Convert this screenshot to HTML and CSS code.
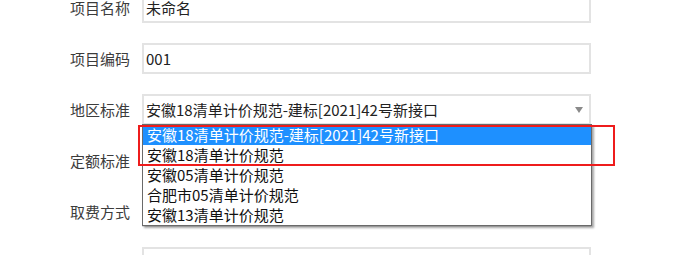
FILE: index.html
```html
<!DOCTYPE html>
<html lang="zh">
<head>
<meta charset="utf-8">
<link rel="stylesheet" href="styles.css">
</head>
<body>
<div class="form">
  <div class="row">
    <label class="label">项目名称</label>
    <div class="field">未命名</div>
  </div>
  <div class="row">
    <label class="label">项目编码</label>
    <div class="field">001</div>
  </div>
  <div class="row">
    <label class="label">地区标准</label>
    <div class="field select">
      <span>安徽18清单计价规范-建标[2021]42号新接口</span>
      <span class="arrow"></span>
      <ul class="dropdown">
        <li class="active">安徽18清单计价规范-建标[2021]42号新接口</li>
        <li>安徽18清单计价规范</li>
        <li>安徽05清单计价规范</li>
        <li>合肥市05清单计价规范</li>
        <li>安徽13清单计价规范</li>
      </ul>
      <div class="highlight-box"></div>
    </div>
  </div>
  <div class="row">
    <label class="label">定额标准</label>
    <div class="field"></div>
  </div>
  <div class="row">
    <label class="label">取费方式</label>
    <div class="field"></div>
  </div>
  <div class="row">
    <label class="label"></label>
    <div class="field"></div>
  </div>
</div>
</body>
</html>
```
FILE: styles.css
```css
html, body {
  margin: 0;
  padding: 0;
  background: #ffffff;
  overflow: hidden;
}
body {
  width: 678px;
  height: 255px;
  font-family: "Noto Sans CJK SC", "Noto Sans", sans-serif;
  font-size: 15px;
}
.form {
  display: flex;
  flex-direction: column;
  gap: 20px;
  margin-top: -8px;
  padding-left: 70px;
}
.row {
  display: flex;
  align-items: center;
  height: 31px;
}
.label {
  width: 60px;
  padding-right: 12px;
  color: #3c3c3c;
  font-size: 15px;
  text-align: left;
  white-space: nowrap;
}
.field {
  position: relative;
  box-sizing: border-box;
  width: 449px;
  height: 31px;
  border: 2px solid #e3e3e3;
  padding-left: 2px;
  display: flex;
  align-items: center;
  color: #222;
  font-size: 15px;
}
.select {
  justify-content: space-between;
}
.arrow {
  width: 0;
  height: 0;
  margin-right: 6px;
  border-left: 4px solid transparent;
  border-right: 4px solid transparent;
  border-top: 6px solid #8a8a8a;
}
.dropdown {
  position: absolute;
  left: -2px;
  top: 28px;
  width: 450px;
  box-sizing: border-box;
  margin: 0;
  padding: 0;
  list-style: none;
  background: #fff;
  border: 1px solid #6a6a6a;
  box-shadow: 2px 2px 2px rgba(0, 0, 0, 0.35);
  z-index: 2;
}
.dropdown li {
  height: 20px;
  line-height: 20px;
  padding-left: 4px;
  color: #111;
  white-space: nowrap;
}
.dropdown li.active {
  background: #1e90ff;
  color: #fff;
}
.highlight-box {
  position: absolute;
  left: -6px;
  top: 29px;
  width: 477px;
  height: 41px;
  box-sizing: border-box;
  border: 2px solid #ee1c1c;
  z-index: 3;
}
```
